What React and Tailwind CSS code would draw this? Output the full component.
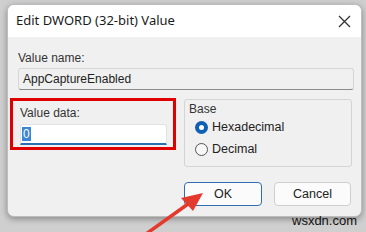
import React from 'react';

export default function App() {
  return (
    <div
      className="relative w-[366px] h-[232px] overflow-hidden bg-[#cfcfcf] pl-[7px] pt-[4px]"
      style={{ fontFamily: '"Liberation Sans", Arial, sans-serif' }}
    >
      {/* dialog */}
      <div className="w-[355px] h-[213px] rounded-[7px] bg-[#f0f0f0] shadow-[0_2px_6px_rgba(0,0,0,0.35)] border border-[#bdbdbd] overflow-hidden flex flex-col">
        <div className="h-[32px] bg-white flex items-center justify-between pl-[8px] pr-[10px] shrink-0">
          <span className="text-[13px] text-[#1a1a1a]" style={{ fontFamily: '"Noto Sans", sans-serif' }}>
            Edit DWORD (32-bit) Value
          </span>
          <svg width="13" height="13" viewBox="0 0 13 13" className="text-[#333]">
            <path d="M1 1 L12 12 M12 1 L1 12" stroke="currentColor" strokeWidth="1.3" />
          </svg>
        </div>

        <div className="flex flex-col pl-[10px] pr-[7px] pt-[13px]">
          <span className="text-[12px] text-[#333] leading-[16px]">Value name:</span>
          <div className="mt-[2px] h-[22px] border border-[#d6d6d6] border-b-[#8a8a8a] rounded-[3px] bg-[#f0f0f0] flex items-center pl-[4px] text-[12px] text-[#222]">
            AppCaptureEnabled
          </div>

          <div className="flex mt-[8px] gap-[8px]">
            {/* value data */}
            <div className="w-[166px] h-[52px] -ml-[8px] border-[3px] border-[#e00000] flex flex-col pl-[7px] pr-[6px] pt-[4px] shrink-0">
              <span className="text-[12px] text-[#333] leading-[16px]">Value data:</span>
              <div className="mt-[3px] h-[21px] bg-white border border-[#e2e2e2] border-b-[2px] border-b-[#2b6fb3] rounded-t-[3px] flex items-center pl-[1px]">
                <span className="bg-[#3a86d4] text-white text-[12px] leading-[14px] px-[1px]">0</span>
              </div>
            </div>

            {/* base group */}
            <div className="w-[168px] h-[68px] mt-[1px] border border-[#d4d4d4] rounded-[3px] flex flex-col pl-[4px] pt-[1px]">
              <span className="text-[12px] text-[#333] leading-[16px]">Base</span>
              <div className="flex items-center gap-[4px] mt-[2px] pl-[6px]">
                <span className="w-[13px] h-[13px] rounded-full bg-[#0f5fb4] flex items-center justify-center">
                  <span className="w-[5px] h-[5px] rounded-full bg-white" />
                </span>
                <span className="text-[12.5px] text-[#222] leading-[16px]">Hexadecimal</span>
              </div>
              <div className="flex items-center gap-[4px] mt-[6px] pl-[6px]">
                <span className="w-[13px] h-[13px] rounded-full border border-[#555] bg-[#f7f7f7]" />
                <span className="text-[12.5px] text-[#222] leading-[16px]">Decimal</span>
              </div>
            </div>
          </div>

          <div className="flex justify-end gap-[12px] mt-[15px] pr-[3px]">
            <button className="w-[78px] h-[24px] rounded-[4px] bg-[#fbfbfb] border-[1.5px] border-[#2f6fb0] text-[12.5px] text-[#222]">
              OK
            </button>
            <button className="w-[77px] h-[24px] rounded-[4px] bg-[#fbfbfb] border border-[#cfcfcf] text-[12.5px] text-[#222]">
              Cancel
            </button>
          </div>
        </div>
      </div>

      {/* watermark */}
      <span className="absolute left-[292px] top-[213px] text-[13px] text-[#111] leading-[15px]">
        wsxdn.com
      </span>

      {/* red arrow */}
      <svg className="absolute left-0 top-0" width="366" height="232" viewBox="0 0 366 232">
        <line x1="146" y1="234" x2="188" y2="204" stroke="#e43a2e" strokeWidth="3.5" strokeLinecap="round" />
        <polygon points="203,193 181,198 193,211" fill="#e43a2e" />
      </svg>
    </div>
  );
}
